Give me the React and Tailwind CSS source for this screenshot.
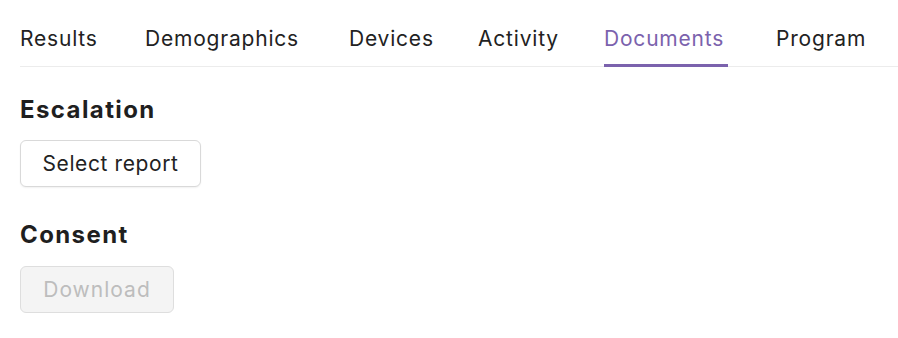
import React from "react";

const tabs = [
  { label: "Results", w: "w-[77px]" },
  { label: "Demographics", w: "w-[156px]" },
  { label: "Devices", w: "w-[81px]" },
  { label: "Activity", w: "w-[78px]" },
  { label: "Documents", w: "w-[124px]" },
  { label: "Program", w: "w-[92px]" },
];

export default function App() {
  return (
    <div className="min-h-[338px] w-full bg-white pl-5 font-['Inter',sans-serif] text-[#222222]">
      <div className="flex gap-[48px] border-b border-[#ececec]">
        {tabs.map((t) => {
          const active = t.label === "Documents";
          return (
            <div key={t.label} className={"relative shrink-0 whitespace-nowrap pt-[25px] pb-[13px] " + t.w}>
              <span
                className={
                  active
                    ? "block text-[21px] leading-[28px] tracking-[0.8px] text-[#7b62ad]"
                    : "block text-[21px] leading-[28px] tracking-[0.8px] text-[#222222]"
                }
              >
                {t.label}
              </span>
              {active && (
                <div className="absolute left-0 right-0 -bottom-[1px] h-[3px] bg-[#7b62ad]" />
              )}
            </div>
          );
        })}
      </div>

      <h2 className="mt-[27px] text-[24px] font-bold leading-[32px] tracking-[1.4px] text-[#1f1f1f]">
        Escalation
      </h2>
      <button className="mt-[14px] flex h-[47px] w-[181px] items-center justify-center rounded-[6px] border border-[#d9d9d9] bg-white text-[21px] leading-[28px] tracking-[0.6px] text-[#222222] shadow-[0_1px_2px_rgba(0,0,0,0.06)]">
        Select report
      </button>

      <h2 className="mt-[32px] text-[24px] font-bold leading-[32px] tracking-[1.4px] text-[#1f1f1f]">
        Consent
      </h2>
      <button
        disabled
        className="mt-[15px] flex h-[47px] w-[154px] items-center justify-center rounded-[6px] border border-[#dedede] bg-[#f4f4f4] text-[21px] leading-[28px] tracking-[1px] text-[#bdbdbd]"
      >
        Download
      </button>
    </div>
  );
}
